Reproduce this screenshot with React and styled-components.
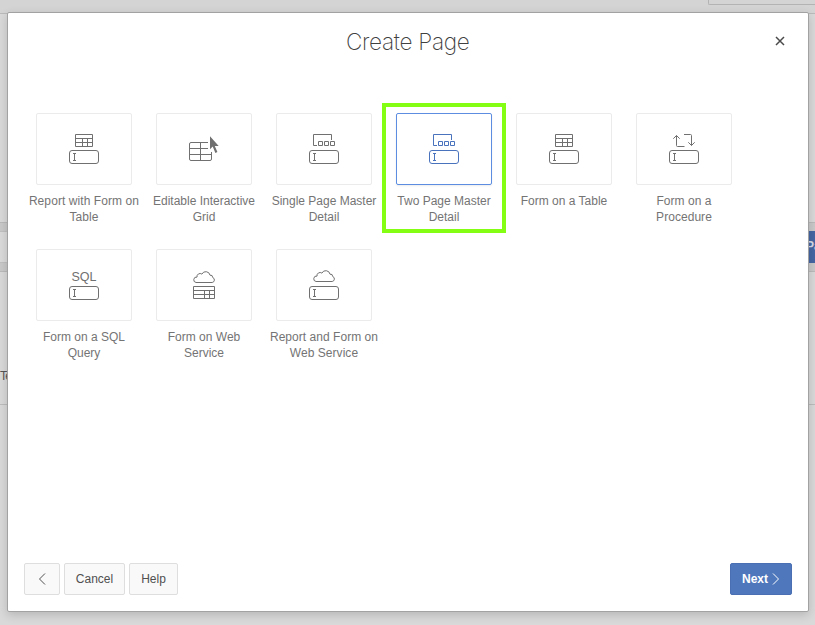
import React from "react";
import styled, { createGlobalStyle, css } from "styled-components";

const GlobalStyle = createGlobalStyle`
  *, *::before, *::after { box-sizing: border-box; }
  body {
    margin: 0;
    overflow: hidden;
    font-family: "Liberation Sans", Arial, sans-serif;
    font-size: 12px;
    color: #6b6b6b;
  }
`;

const Screen = styled.div`
  position: relative;
  height: 625px;
  overflow: hidden;
  display: flex;
  flex-direction: column;
  background: #d9d9d9;
`;

const TopBar = styled.div`
  height: 14px;
  display: flex;
  justify-content: flex-end;
  background: #d4d4d4;
  border-bottom: 1px solid #bababa;
`;

const SearchField = styled.div`
  width: 107px;
  height: 5px;
  border: solid #b3b3b3;
  border-width: 0 0 1px 1px;
  border-radius: 0 0 0 2px;
`;

const Content = styled.div`
  height: 208px;
`;

const Toolbar = styled.div`
  height: 50px;
  padding: 8px 0;
  display: flex;
  justify-content: space-between;
  background: #c9c9c9;
  border: solid #bababa;
  border-width: 1px 0;
`;

const ToolbarField = styled.div`
  width: 60px;
  border: solid #c0c0c0;
  border-width: 1px 0;
  background: #dadada;
`;

const ToolbarButton = styled.div`
  width: 9px;
  overflow: hidden;
  background: #4566a3;
  color: #d5dbe6;
  font-weight: bold;
  line-height: 31px;
  white-space: nowrap;
`;

const Results = styled.div`
  height: 133px;
  padding-top: 97px;
  border-bottom: 1px solid #bcbcbc;
  color: #555;
  line-height: 15px;
  letter-spacing: -0.8px;
`;

const Dialog = styled.section`
  position: absolute;
  left: 7px;
  top: 12px;
  width: 802px;
  height: 600px;
  display: flex;
  flex-direction: column;
  background: #fff;
  border: 1px solid #a2a2a2;
  border-radius: 2px;
  box-shadow: 0 3px 10px rgba(0, 0, 0, 0.16);
`;

const Header = styled.header`
  height: 100px;
  padding: 15px 22.5px 0 22px;
  display: grid;
  grid-template-columns: 12px 1fr 12px;
  align-items: start;
`;

const Title = styled.h1`
  grid-column: 2;
  margin: 0;
  text-align: center;
  font-family: Inter, "Liberation Sans", sans-serif;
  font-size: 22.6px;
  font-weight: 200;
  line-height: 27px;
  letter-spacing: -0.3px;
  color: #404040;
`;

const CloseButton = styled.button`
  margin: 7px 0 0;
  padding: 0;
  width: 12px;
  height: 12px;
  border: 0;
  background: none;
  color: #4a4a4a;
`;

const TileGrid = styled.div`
  flex: 1;
  padding: 0 16px;
  display: grid;
  grid-template-columns: repeat(6, 120px);
  grid-auto-rows: 136px;
`;

const Tile = styled.div`
  position: relative;
  display: flex;
  flex-direction: column;
  align-items: center;
`;

const TileBox = styled.div`
  width: 96px;
  height: 72px;
  display: flex;
  align-items: center;
  justify-content: center;
  border: 1px solid #ebebeb;
  border-radius: 2px;
  color: #707070;
  ${(p) =>
    p.$selected &&
    css`
      border-color: #5c8de0;
      color: #4a73bd;
      box-shadow: 0 1px 2px rgba(0, 0, 0, 0.08);
    `}
`;

const TileLabel = styled.div`
  margin-top: 8px;
  font-size: 12px;
  line-height: 16px;
  letter-spacing: ${(p) => p.$tracking || 0}px;
  text-align: center;
  white-space: pre;
  color: #747474;
`;

const Highlight = styled.div`
  position: absolute;
  left: -2px;
  top: -10px;
  width: 124px;
  height: 130px;
  border: 4px solid #84ff14;
`;

const Footer = styled.footer`
  height: 48px;
  padding: 0 16px;
  display: flex;
  gap: 4px;
`;

const Button = styled.button`
  width: ${(p) => p.$width}px;
  height: 32px;
  padding: 0;
  display: flex;
  align-items: center;
  justify-content: center;
  border: 1px solid #dedede;
  border-radius: 2px;
  background: #f9f9f9;
  color: #505050;
  font: 12px/16px "Liberation Sans", Arial, sans-serif;
  ${(p) =>
    p.$primary &&
    css`
      margin-left: auto;
      gap: 4px;
      border-color: #4a70b3;
      background: #4f77bc;
      color: #fff;
      font-weight: bold;
    `}
`;

const IconSvg = styled.svg`
  display: block;
  fill: none;
  stroke: currentColor;
  stroke-width: ${(p) => p.$weight || 1};
`;

const SqlText = styled.text`
  font-size: 12.5px;
  fill: currentColor;
  stroke: none;
`;

const InputField = () => (
  <>
    <rect x="1.5" y="17.5" width="29" height="13" rx="2.5" />
    <path d="M6.5 20v8M5 20.5h3M5 27.5h3" />
  </>
);

const SmallTable = () => (
  <path d="M7.5 1.5h17v12h-17zM7.5 5.5h17M7.5 9.5h17M14.5 5.5v8M19.5 5.5v8" />
);

const MasterRows = () => (
  <path d="M9 12.5H5.5V1.5H23.5V7M10.5 8.5h4v4h-4zM16.5 8.5h4v4h-4zM22.5 8.5h4v4h-4z" />
);

const Cloud = () => (
  <path d="M8 12.5h16.2a2.6 2.6 0 0 0 .5-5 2.3 2.3 0 0 0-2.7-2.3 4.3 4.3 0 0 0-8.1-1.1 3.1 3.1 0 0 0-4.9 3 2.7 2.7 0 0 0-1 5.4z" />
);

const art = {
  table: <><SmallTable /><InputField /></>,
  master: <><MasterRows /><InputField /></>,
  grid: (
    <>
      <path d="M20 9.5H3a1.5 1.5 0 0 0-1.5 1.5v15A1.5 1.5 0 0 0 3 27.5h19a1.5 1.5 0 0 0 1.5-1.5v-7M12.5 9.5v18M1.5 15.5H20M1.5 21.5h22" />
      <path d="M22 3.3V16.2l2.7-2.6 2.7 6.3 2-.9-2.6-6.1h3.9z" fill="currentColor" stroke="none" />
    </>
  ),
  procedure: (
    <>
      <path d="M5.3 5.7 8.5 2.5l3.2 3.2M8.5 2.5v10q0 1 1 1H16.5M16 1.5h6.5q1 0 1 1v10M20.3 9.3l3.2 3.2 3.2-3.2" />
      <InputField />
    </>
  ),
  sql: (
    <>
      <SqlText x="3.5" y="12">SQL</SqlText>
      <InputField />
    </>
  ),
  cloudTable: (
    <>
      <g transform="translate(0 1)"><Cloud /></g>
      <path d="M5.5 17.5h21v12h-21zM5.5 21.5h21M5.5 25.5h21M16.5 21.5v8M21.5 21.5v8" />
    </>
  ),
  cloudInput: <><Cloud /><InputField /></>,
};

const pages = [
  { icon: "table", label: "Report with Form on\nTable", tracking: 0.08 },
  { icon: "grid", label: "Editable Interactive\nGrid" },
  { icon: "master", label: "Single Page Master\nDetail" },
  { icon: "master", label: "Two Page Master\nDetail", selected: true },
  { icon: "table", label: "Form on a Table" },
  { icon: "procedure", label: "Form on a\nProcedure", tracking: 0.05 },
  { icon: "sql", label: "Form on a SQL\nQuery" },
  { icon: "cloudTable", label: "Form on Web\nService" },
  { icon: "cloudInput", label: "Report and Form on\nWeb Service", tracking: 0.04 },
];

const PageTile = ({ icon, label, tracking, selected }) => (
  <Tile>
    <TileBox $selected={selected}>
      <IconSvg width="32" height="32" viewBox="0 0 32 32">{art[icon]}</IconSvg>
    </TileBox>
    <TileLabel $tracking={tracking}>{label}</TileLabel>
    {selected && <Highlight />}
  </Tile>
);

export default function App() {
  return (
    <>
      <GlobalStyle />
      <Screen>
        <TopBar><SearchField /></TopBar>
        <Content />
        <Toolbar>
          <ToolbarField />
          <ToolbarButton>Pa</ToolbarButton>
        </Toolbar>
        <Results>Te</Results>
        <Dialog>
          <Header>
            <Title>Create Page</Title>
            <CloseButton aria-label="Close">
              <IconSvg $weight={1.5} width="12" height="12" viewBox="0 0 12 12">
                <path d="M2 2l8 8M10 2l-8 8" />
              </IconSvg>
            </CloseButton>
          </Header>
          <TileGrid>
            {pages.map((page) => <PageTile key={page.label} {...page} />)}
          </TileGrid>
          <Footer>
            <Button $width={36} aria-label="Back">
              <IconSvg width="8" height="12" viewBox="0 0 8 12"><path d="M7 .5 1.5 6 7 11.5" /></IconSvg>
            </Button>
            <Button $width={61}>Cancel</Button>
            <Button $width={49}>Help</Button>
            <Button $width={62} $primary>
              Next
              <IconSvg width="8" height="12" viewBox="0 0 8 12"><path d="M1 .5 6.5 6 1 11.5" /></IconSvg>
            </Button>
          </Footer>
        </Dialog>
      </Screen>
    </>
  );
}
